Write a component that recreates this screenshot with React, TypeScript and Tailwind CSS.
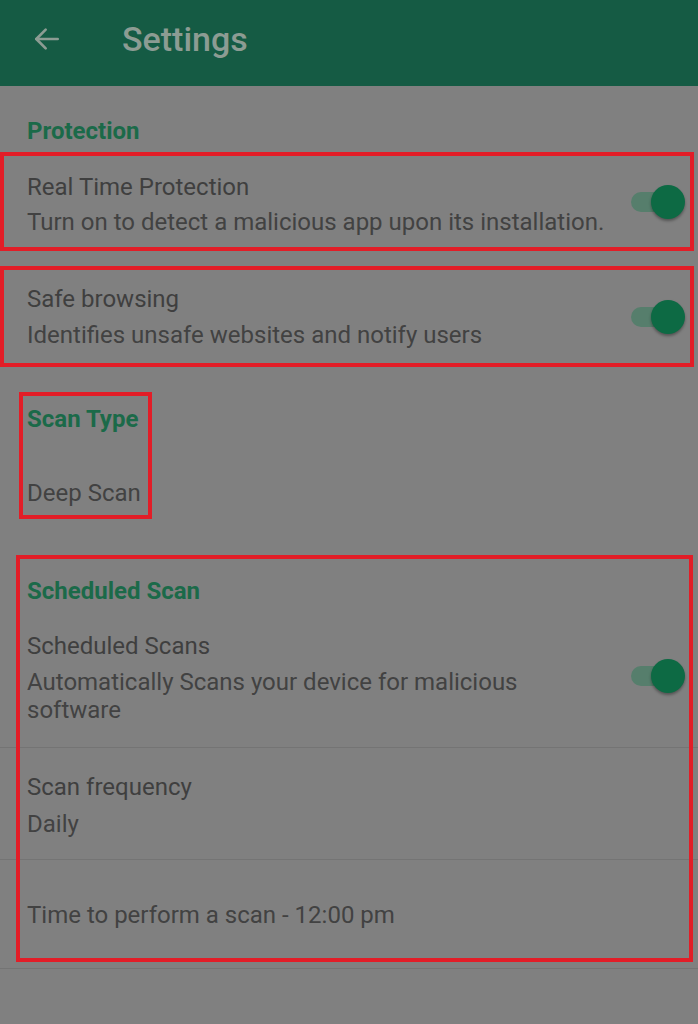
import React from "react";

const Toggle = () => (
  <div className="relative w-[54px] h-[34px] shrink-0 mr-[13px]">
    <div className="absolute left-0 top-[7px] w-[42px] h-[20px] rounded-full bg-[#567e6c]" />
    <div className="absolute right-0 top-0 w-[34px] h-[34px] rounded-full bg-[#0d6a44] shadow-[0_2px_3px_rgba(0,0,0,0.35)]" />
  </div>
);

const Box = ({ c }: { c: string }) => (
  <div className={"absolute border-[4px] border-[#e21d27] pointer-events-none " + c} />
);

export default function App() {
  return (
    <div
      className="relative w-[698px] h-[1024px] bg-[#808080] overflow-hidden"
      style={{ fontFamily: "Roboto, 'Noto Sans', sans-serif" }}
    >
      <header className="h-[86px] bg-[#155b44] flex items-center">
        <svg
          className="ml-[31px] mt-[-8px]"
          width="32"
          height="32"
          viewBox="0 0 24 24"
          fill="none"
          stroke="#8c9c93"
          strokeWidth="2"
          strokeLinecap="round"
          strokeLinejoin="round"
        >
          <path d="M20 12H4" />
          <path d="M11 5l-7 7 7 7" />
        </svg>
        <h1 className="ml-[59px] mt-[-8px] text-[34px] font-medium text-[#8c9c93] leading-[40px]">
          Settings
        </h1>
      </header>

      <div className="pl-[27px] pt-[31px] pb-[8px] text-[24px] leading-[28px] font-bold text-[#1b6a49]">
        Protection
      </div>

      <div className="h-[98px] flex items-center">
        <div className="flex-1 pl-[27px] pt-[4px]">
          <div className="text-[24px] leading-[28px] text-[#3f3f3f]">Real Time Protection</div>
          <div className="mt-[7px] text-[24px] leading-[28px] text-[#424242]">
            Turn on to detect a malicious app upon its installation.
          </div>
        </div>
        <Toggle />
      </div>

      <div className="h-[16px]" />

      <div className="h-[100px] flex items-center">
        <div className="flex-1 pl-[27px]">
          <div className="text-[24px] leading-[28px] text-[#3f3f3f]">Safe browsing</div>
          <div className="mt-[8px] text-[24px] leading-[28px] text-[#424242]">
            Identifies unsafe websites and notify users
          </div>
        </div>
        <Toggle />
      </div>

      <div className="pl-[27px] pt-[38px]">
        <div className="text-[24px] leading-[28px] font-bold text-[#1b6a49]">Scan Type</div>
        <div className="mt-[46px] text-[24px] leading-[28px] text-[#424242]">Deep Scan</div>
      </div>

      <div className="pl-[27px] pt-[70px] text-[24px] leading-[28px] font-bold text-[#1b6a49]">
        Scheduled Scan
      </div>

      <div className="h-[143px] flex items-center border-b border-[#747474]">
        <div className="flex-1 pl-[27px] pt-[4px]">
          <div className="text-[24px] leading-[28px] text-[#3f3f3f]">Scheduled Scans</div>
          <div className="mt-[8px] w-[540px] text-[24px] leading-[28px] text-[#424242]">
            Automatically Scans your device for malicious software
          </div>
        </div>
        <Toggle />
      </div>

      <div className="h-[112px] border-b border-[#747474] pl-[27px] pt-[25px]">
        <div className="text-[24px] leading-[28px] text-[#3f3f3f]">Scan frequency</div>
        <div className="mt-[9px] text-[24px] leading-[28px] text-[#424242]">Daily</div>
      </div>

      <div className="h-[109px] border-b border-[#747474] pl-[27px] pt-[41px]">
        <div className="text-[24px] leading-[28px] text-[#424242]">
          Time to perform a scan - 12:00 pm
        </div>
      </div>

      <Box c="left-0 top-[152px] w-[694px] h-[99px]" />
      <Box c="left-0 top-[266px] w-[694px] h-[101px]" />
      <Box c="left-[19px] top-[392px] w-[133px] h-[127px]" />
      <Box c="left-[16px] top-[555px] w-[677px] h-[407px]" />
    </div>
  );
}
